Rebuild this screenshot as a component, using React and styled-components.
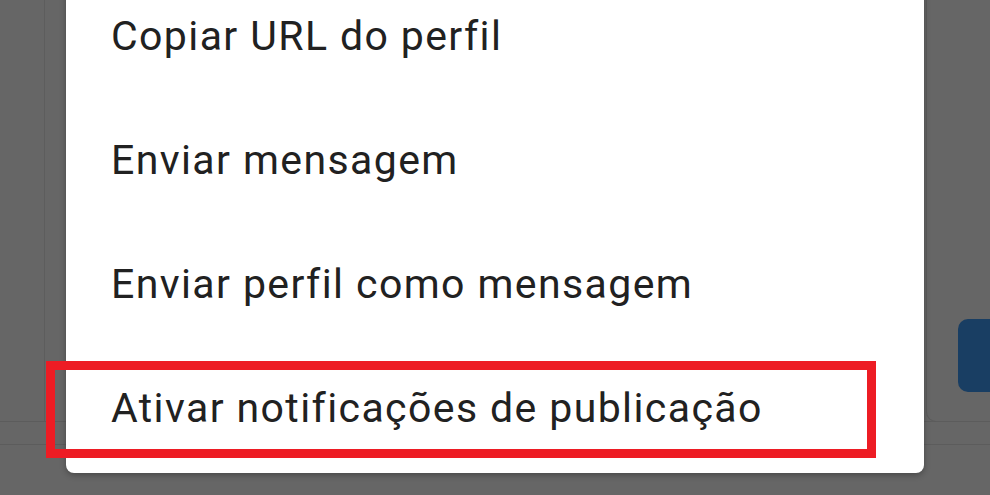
import React from 'react';
import styled, { createGlobalStyle } from 'styled-components';

const GlobalStyle = createGlobalStyle`
  html, body {
    margin: 0;
    padding: 0;
    background: #666666;
  }
  body {
    font-family: Roboto, "Noto Sans", sans-serif;
  }
`;

const menuItems = [
  'Copiar URL do perfil',
  'Enviar mensagem',
  'Enviar perfil como mensagem',
  'Ativar notificações de publicação',
];

const Page = () => {
  return (
    <Screen>
      <Backdrop>
        <TopArea>
          <SideRail />
          <Spacer />
          <SidePanel>
            <ActionButton />
          </SidePanel>
        </TopArea>
        <BottomLine />
      </Backdrop>
      <Menu>
        {menuItems.map((item) => (
          <MenuItem key={item}>{item}</MenuItem>
        ))}
      </Menu>
      <Highlight />
    </Screen>
  );
};

const Screen = styled.div`
  position: relative;
  width: 990px;
  height: 495px;
  overflow: hidden;
  background-color: #666666;
`;

const Backdrop = styled.div`
  display: flex;
  flex-direction: column;
  height: 100%;
`;

const TopArea = styled.div`
  display: flex;
  height: 422px;
  border-bottom: 1px solid #5c5c5c;
  box-sizing: border-box;
`;

const SideRail = styled.div`
  width: 44px;
  border-right: 1px solid #5d5d5d;
`;

const Spacer = styled.div`
  flex: 1;
`;

const SidePanel = styled.div`
  width: 64px;
  margin-bottom: -1px;
  border-left: 1px solid #5c5c5c;
  border-bottom: 1px solid #5c5c5c;
  border-bottom-left-radius: 10px;
  padding: 319px 0 0 31px;
  box-sizing: border-box;
`;

const ActionButton = styled.div`
  width: 60px;
  height: 73px;
  border-radius: 10px;
  background-color: #193e63;
`;

const BottomLine = styled.div`
  margin-top: 22px;
  border-top: 1px solid #5c5c5c;
`;

const Menu = styled.div`
  position: absolute;
  left: 66px;
  top: -26px;
  width: 858px;
  padding-bottom: 3px;
  background-color: #ffffff;
  border-radius: 8px;
  box-shadow: 0 2px 6px rgba(0, 0, 0, 0.3);
`;

const MenuItem = styled.div`
  height: 124px;
  line-height: 124px;
  padding-left: 45px;
  font-family: Roboto, sans-serif;
  font-size: 41px;
  letter-spacing: 1.4px;
  color: #212121;
  white-space: nowrap;
`;

const Highlight = styled.div`
  position: absolute;
  left: 46px;
  top: 361px;
  width: 830px;
  height: 97px;
  border: 9px solid #ed1c24;
  box-sizing: border-box;
  pointer-events: none;
`;

export default function App() {
  return (
    <>
      <GlobalStyle />
      <Page />
    </>
  );
}
